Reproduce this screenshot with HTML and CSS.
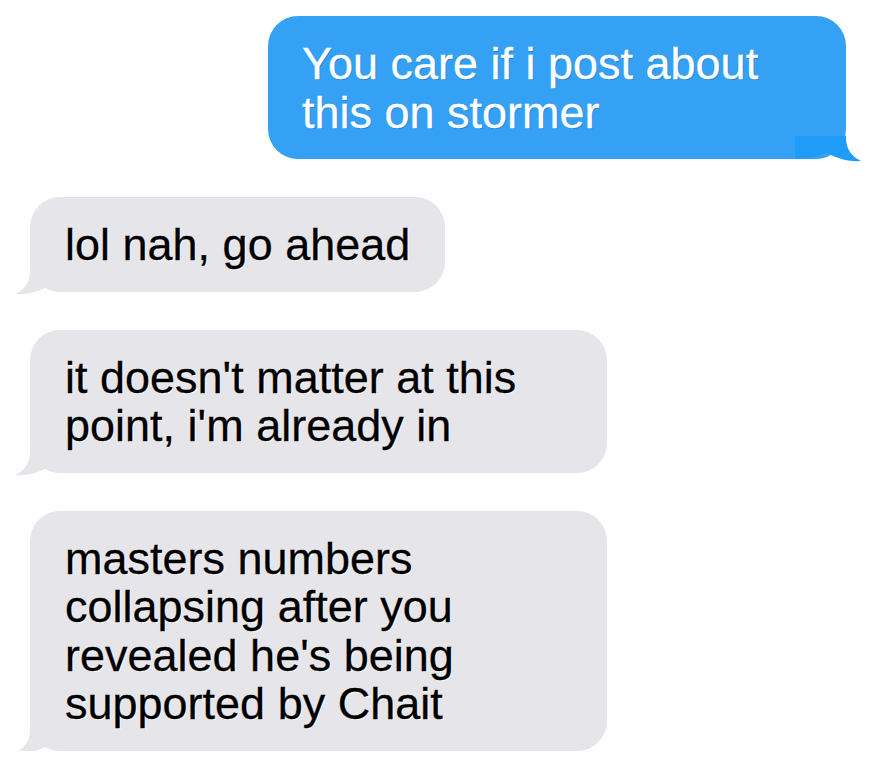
FILE: index.html
```html
<!DOCTYPE html>
<html>
<head>
  <title>Messages</title>
  <link rel="stylesheet" href="styles.css">
</head>
<body>
  <div class="thread">
    <div class="bubble sent">
      <svg class="tail" width="70" height="40" viewBox="0 0 70 40">
        <path d="M30 13 L54 13 L54 17 C55 27 60 34 69 38 C56 39 43 35 34 29 C26 34 16 36 3 36 L3 13 Z"/>
      </svg>
      <p class="text">You care if i post about<br>this on stormer</p>
    </div>

    <div class="bubble received short">
      <svg class="tail" width="70" height="40" viewBox="0 0 70 40">
        <path d="M30 10 L54 10 L54 17 C55 27 60 34 69 38 C56 39 43 35 34 29 C26 34 16 36 3 36 L3 10 Z"/>
      </svg>
      <p class="text">lol nah, go ahead</p>
    </div>

    <div class="bubble received">
      <svg class="tail" width="70" height="40" viewBox="0 0 70 40">
        <path d="M30 10 L54 10 L54 17 C55 27 60 34 69 38 C56 39 43 35 34 29 C26 34 16 36 3 36 L3 10 Z"/>
      </svg>
      <p class="text">it doesn't matter at this<br>point, i'm already in</p>
    </div>

    <div class="bubble received">
      <svg class="tail" width="70" height="40" viewBox="0 0 70 40">
        <path d="M30 10 L54 10 L54 17 C55 27 60 34 69 38 C56 39 43 35 34 29 C26 34 16 36 3 36 L3 10 Z"/>
      </svg>
      <p class="text">masters numbers<br>collapsing after you<br>revealed he's being<br>supported by Chait</p>
    </div>
  </div>
</body>
</html>
```

FILE: styles.css
```css
body {
  margin: 0;
  background: #ffffff;
  font-family: "Liberation Sans", Arial, sans-serif;
}
.thread {
  display: flex;
  flex-direction: column;
  gap: 38px;
  padding-top: 16px;
}
.bubble {
  position: relative;
  box-sizing: border-box;
  font-size: 45px;
  line-height: 48.5px;
  padding: 24px 20px 22px 34px;
  border-radius: 30px;
}
.bubble .text {
  position: relative;
  margin: 0;
  -webkit-text-stroke: 0.3px currentColor;
}
.bubble .tail {
  position: absolute;
  bottom: -4px;
}
.sent {
  align-self: flex-end;
  width: 578px;
  margin-right: 36px;
  background: #34a1f4;
  color: #ffffff;
  text-shadow: 1px 1px 0 rgba(20, 110, 200, 0.6);
}
.sent .tail {
  right: -16px;
  fill: #1e9cf6;
}
.received {
  align-self: flex-start;
  width: 577px;
  margin-left: 30px;
  padding-left: 35px;
  background: #e5e5ea;
  color: #000000;
  text-shadow: 1px 1px 0 rgba(255, 255, 255, 0.9);
}
.received.short {
  width: 415px;
}
.received .tail {
  left: -16px;
  fill: #e5e5ea;
  transform: scaleX(-1);
}
```
